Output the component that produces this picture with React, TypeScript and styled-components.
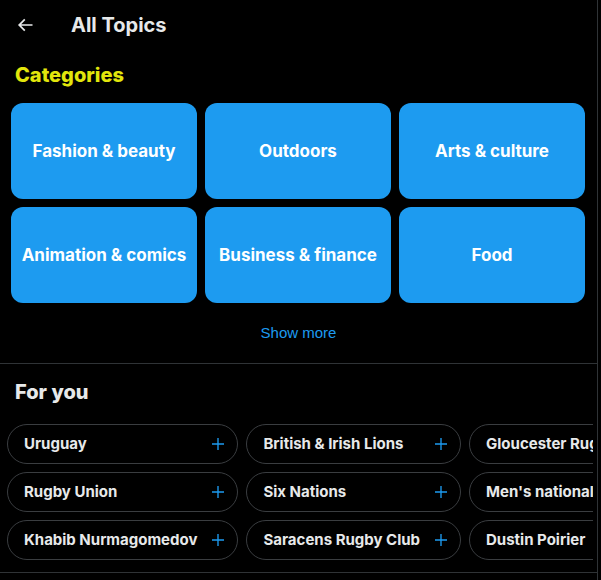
import React from 'react';
import styled, {createGlobalStyle} from "styled-components";

const categories = [
    'Fashion & beauty',
    'Outdoors',
    'Arts & culture',
    'Animation & comics',
    'Business & finance',
    'Food',
];

// listed column by column, three chips per column
const topics = [
    'Uruguay', 'Rugby Union', 'Khabib Nurmagomedov',
    'British & Irish Lions', 'Six Nations', 'Saracens Rugby Club',
    'Gloucester Rugby', "Men's national teams", 'Dustin Poirier',
];

const GlobalStyle = createGlobalStyle`
  html, body {
    margin: 0;
    padding: 0;
    background: #000;
  }
  body {
    font-family: "Inter", "Noto Sans", sans-serif;
    color: #e7e9ea;
  }
`;

const BackIcon = () => (
    <svg viewBox="0 0 24 24" width="20" height="20" fill="currentColor">
        <path d="M7.414 13l5.043 5.04-1.414 1.42L3.586 12l7.457-7.46 1.414 1.42L7.414 11H21v2H7.414z"/>
    </svg>
);

const PlusIcon = () => (
    <svg viewBox="0 0 24 24" width="18" height="18" fill="currentColor">
        <path d="M11.1 11.1V4h1.8v7.1H20v1.8h-7.1V20h-1.8v-7.1H4v-1.8h7.1z"/>
    </svg>
);

const App = () => {
    return (
        <>
            <GlobalStyle/>
            <Column>
                <Header>
                    <BackButton><BackIcon/></BackButton>
                    <Title>All Topics</Title>
                </Header>

                <Section>
                    <SectionTitle $color="#e2e60c" $top={13}>Categories</SectionTitle>
                    <CategoryGrid>
                        {categories.map(c => (
                            <CategoryCard key={c}>{c}</CategoryCard>
                        ))}
                    </CategoryGrid>
                    <ShowMore>Show more</ShowMore>
                </Section>

                <Section>
                    <SectionTitle $top={16}>For you</SectionTitle>
                    <ChipScroller>
                        <ChipGrid>
                            {topics.map(t => (
                                <Chip key={t}>
                                    <ChipLabel>{t}</ChipLabel>
                                    <ChipAdd><PlusIcon/></ChipAdd>
                                </Chip>
                            ))}
                        </ChipGrid>
                    </ChipScroller>
                </Section>
            </Column>
        </>
    );
};

const Column = styled.div`
  width: 598px;
  box-sizing: border-box;
  min-height: 580px;
  border-right: 1px solid #2f3336;
`;

const Header = styled.div`
  height: 50px;
  display: flex;
  align-items: center;
  padding-left: 15px;
`;

const BackButton = styled.div`
  width: 56px;
  height: 20px;
  display: flex;
  align-items: center;
  color: #e7e9ea;
`;

const Title = styled.h2`
  margin: 0;
  font-size: 20px;
  font-weight: 700;
  line-height: 24px;
  color: #e7e9ea;
`;

const Section = styled.section`
  border-bottom: 1px solid #2f3336;
`;

const SectionTitle = styled.h2<{ $color?: string; $top: number }>`
  margin: 0;
  padding: ${props => props.$top}px 15px 0;
  font-size: 20px;
  font-weight: 800;
  line-height: 24px;
  color: ${props => props.$color || '#e7e9ea'};
`;

const CategoryGrid = styled.div`
  display: grid;
  grid-template-columns: repeat(3, 1fr);
  grid-auto-rows: 96px;
  gap: 8px;
  padding: 16px 12px 0 11px;
`;

const CategoryCard = styled.div`
  display: flex;
  align-items: center;
  justify-content: center;
  border-radius: 12px;
  background-color: #1d9bf0;
  color: #fff;
  font-size: 17px;
  font-weight: 700;
  text-align: center;
  cursor: pointer;
`;

const ShowMore = styled.div`
  padding: 21px 0 21px;
  line-height: 18px;
  text-align: center;
  font-family: "Liberation Sans", Arial, sans-serif;
  font-size: 15px;
  color: #1d9bf0;
`;

const ChipScroller = styled.div`
  margin: 20px 4px 0 7px;
  padding-bottom: 12px;
  overflow: hidden;
`;

const ChipGrid = styled.div`
  display: grid;
  grid-auto-flow: column;
  grid-template-rows: repeat(3, 40px);
  grid-auto-columns: max-content;
  gap: 8px;
`;

const Chip = styled.div`
  display: flex;
  align-items: center;
  justify-content: space-between;
  gap: 12px;
  box-sizing: border-box;
  padding: 0 10px 0 16px;
  border: 1px solid #3a3d40;
  border-radius: 9999px;
  font-size: 15px;
  font-weight: 700;
  color: #e7e9ea;
  white-space: nowrap;
`;

const ChipLabel = styled.span`
  line-height: 20px;
`;

const ChipAdd = styled.span`
  display: flex;
  color: #1d9bf0;
`;

export default App;
